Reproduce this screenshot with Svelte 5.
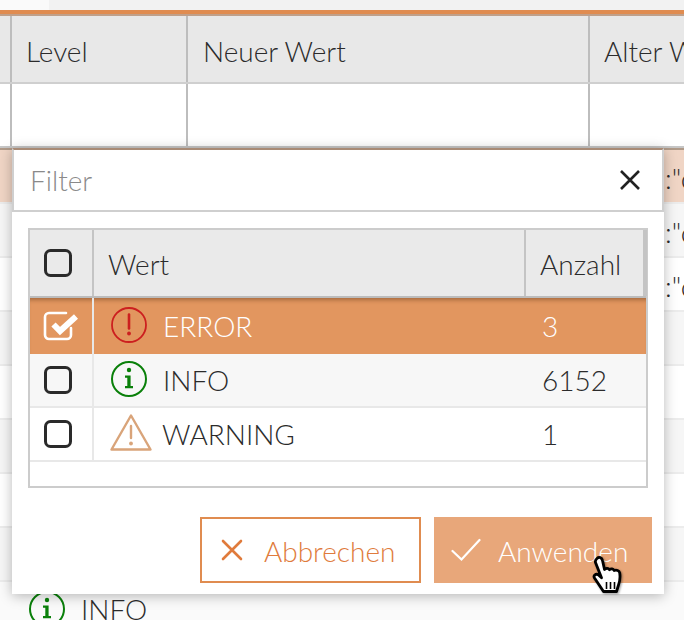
<script lang="ts">
  const columns = ['Level', 'Neuer Wert', 'Alter Wert']
  const backgroundRows = [
    { tint: 'picked', text: ':"c' },
    { tint: 'odd', text: ':"c' },
    { tint: '', text: ':"c' },
    { tint: 'odd', text: '' },
    { tint: '', text: '' },
    { tint: 'odd', text: '' },
    { tint: '', text: '' },
    { tint: 'odd', text: '' }
  ]
  const levels = [
    { name: 'ERROR', count: 3, icon: 'error', checked: true },
    { name: 'INFO', count: 6152, icon: 'info', checked: false },
    { name: 'WARNING', count: 1, icon: 'warning', checked: false }
  ]
</script>

{#snippet levelIcon(kind: string)}
  {#if kind === 'error'}
    <svg class="icon" viewBox="0 0 38 38" width="38" height="38">
      <circle cx="19" cy="19" r="17" fill="none" stroke="#cc1f1f" stroke-width="1.8" />
      <path d="M19 8.500v14" stroke="#cc1f1f" stroke-width="2.600" stroke-linecap="round" />
      <circle cx="19" cy="27.500" r="1.900" fill="#cc1f1f" />
    </svg>
  {:else if kind === 'info'}
    <svg class="icon" viewBox="0 0 38 38" width="38" height="38">
      <circle cx="19" cy="19" r="17" fill="none" stroke="#0a800a" stroke-width="2" />
      <circle cx="19" cy="10" r="2.200" fill="#0a800a" />
      <path d="M15 15.500h5.600V26H23v2.200h-8V26h2.300v-8.300H15z" fill="#0a800a" />
    </svg>
  {:else}
    <svg class="icon warn" viewBox="0 0 44 38" width="44" height="38">
      <path d="M21 2.500 40.500 36.500H1.500z" fill="none" stroke="#d9a47a" stroke-width="2.400" stroke-linejoin="round" />
      <path d="M21 13v12" stroke="#d9a47a" stroke-width="2.400" stroke-linecap="round" />
      <circle cx="21" cy="30.500" r="1.900" fill="#d9a47a" />
    </svg>
  {/if}
{/snippet}

{#snippet checkbox(checked: boolean)}
  {#if checked}
    <svg class="box" viewBox="0 0 36 30" width="36" height="30">
      <path d="M28 17v7a4 4 0 0 1-4 4H6a4 4 0 0 1-4-4V6a4 4 0 0 1 4-4h17" fill="none" stroke="#fff" stroke-width="2.600" stroke-linecap="round" />
      <path d="M10.500 13.500 17 20 33 5.500" fill="none" stroke="#fff" stroke-width="6" />
    </svg>
  {:else}
    <svg class="box" viewBox="0 0 36 30" width="36" height="30">
      <rect x="2.500" y="2.500" width="25" height="25" rx="5" fill="none" stroke="#2a2a2a" stroke-width="3" />
    </svg>
  {/if}
{/snippet}

<div class="page">
  <div class="topbar"><span class="tab"></span></div>
  <div class="accent"></div>

  <div class="grid head">
    <div class="stub"></div>
    {#each columns as col}
      <div class="th">{col}</div>
    {/each}
  </div>
  <div class="grid filters">
    <div class="stub"></div>
    <div class="cell"></div>
    <div class="cell"></div>
    <div class="cell"></div>
  </div>

  <div class="rows">
    {#each backgroundRows as row}
      <div class="row {row.tint}">{row.text}</div>
    {/each}
    <div class="row last">
      {@render levelIcon('info')}
      <span>INFO</span>
    </div>
  </div>

  <div class="popup">
    <div class="search">
      <span class="placeholder">Filter</span>
      <svg viewBox="0 0 22 22" width="22" height="22">
        <path d="M2 2l18 18M20 2 2 20" stroke="#222" stroke-width="2.600" />
      </svg>
    </div>

    <div class="list">
      <div class="list-head">
        <div class="check">{@render checkbox(false)}</div>
        <div class="col-name">Wert</div>
        <div class="col-count">Anzahl</div>
        <div class="col-end"></div>
      </div>
      {#each levels as level}
        <div class="item" class:checked={level.checked}>
          <div class="check">{@render checkbox(level.checked)}</div>
          <div class="name">
            {@render levelIcon(level.icon)}
            <span>{level.name}</span>
          </div>
          <div class="count">{level.count}</div>
        </div>
      {/each}
    </div>

    <div class="actions">
      <button class="cancel">
        <svg viewBox="0 0 22 22" width="22" height="22">
          <path d="M2 2l18 18M20 2 2 20" stroke="#e07b3c" stroke-width="2.600" stroke-linecap="round" />
        </svg>
        <span>Abbrechen</span>
      </button>
      <button class="apply">
        <svg viewBox="0 0 30 24" width="30" height="24">
          <path d="M1.500 13 10.500 21.500 28.500 2" fill="none" stroke="#fff" stroke-width="2.200" stroke-linecap="round" />
        </svg>
        <span>Anwenden</span>
      </button>
    </div>
  </div>

  <svg class="cursor" viewBox="0 0 34 40" width="34" height="40">
    <path d="M6 3.500c2-2 5-1 5.500 2l2 9c1.800-1.500 3.800-1.500 5 .2 1.600-1.200 3.600-1 4.700.8 2.300-.8 5 0 5.500 2.200.6 4 .3 8.300-1.200 12.300l-2 6.500H12.500l-9-13.500c-1.500-2.500 1.500-5 4-3l3 2.700L4.500 7.500c-.4-1.500.3-3 1.500-4z" fill="#fff" stroke="#000" stroke-width="2.800" stroke-linejoin="round" />
    <path d="M15.500 27v7M19.500 27v7M23.500 27v7" stroke="#000" stroke-width="1.600" />
  </svg>
</div>

<style>
  :global(body) {
    margin: 0;
    background: #fff;
  }

  .page {
    position: relative;
    width: 684px;
    height: 620px;
    overflow: hidden;
    font-family: Lato, "Open Sans", sans-serif;
    font-weight: 300;
    font-size: 28px;
    color: #2b2b2b;
    background: #fff;
  }

  .topbar {
    height: 10px;
    background: #f2f2f2;
  }

  .tab {
    display: block;
    width: 49px;
    height: 10px;
    background: #fafafa;
  }

  .accent {
    height: 4px;
    background: #e08c50;
    border-bottom: 2px solid #c0a08a;
  }

  .grid {
    display: grid;
    grid-template-columns: 12px 176px 402px 300px;
  }

  .grid > div {
    box-sizing: border-box;
    border-right: 2px solid #bdbdbd;
  }

  .head {
    height: 68px;
    box-sizing: border-box;
    background: #e8e8e8;
    border-bottom: 2px solid #cfcfcf;
  }

  .th {
    padding: 17px 0 0 14px;
    line-height: 36px;
    white-space: nowrap;
  }

  .th:nth-child(3) {
    padding-left: 15px;
  }

  .filters {
    height: 64px;
    box-sizing: border-box;
    background: #fff;
    border-bottom: 2px solid #c6c6c6;
  }

  .rows {
    border-top: 2px solid #b09a88;
  }

  .row {
    height: 54px;
    box-sizing: border-box;
    border-bottom: 2px solid #ececec;
    padding-left: 665px;
    line-height: 56px;
    white-space: nowrap;
    background: #fff;
  }

  .row.odd {
    background: #f6f6f6;
  }

  .row.picked {
    background: #f0d5c5;
  }

  .row.last {
    display: flex;
    align-items: center;
    gap: 15px;
    padding-left: 28px;
    border: none;
    background: #fafafa;
  }

  .popup {
    position: absolute;
    left: 12px;
    top: 148px;
    width: 652px;
    height: 446px;
    background: #fff;
    box-shadow: 0 2px 12px rgba(0, 0, 0, 0.28);
  }

  .search {
    height: 64px;
    box-sizing: border-box;
    border: 2px solid #cfcfcf;
    border-top-color: #a88a75;
    display: flex;
    align-items: center;
    justify-content: space-between;
    padding: 0 21px 0 16px;
  }

  .placeholder {
    color: #8a8a8a;
  }

  .list {
    margin: 16px 16px 0;
    height: 260px;
    box-sizing: border-box;
    border: 2px solid #cccccc;
  }

  .list-head {
    display: grid;
    grid-template-columns: 64px 432px 119px 1fr;
    height: 68px;
    box-sizing: border-box;
    background: #eaeaea;
    border-bottom: 2px solid #bcbcbc;
  }

  .list-head > div {
    display: flex;
    align-items: center;
    border-right: 2px solid #c4c4c4;
    box-sizing: border-box;
  }

  .col-name,
  .col-count {
    padding: 1px 0 0 14px;
  }

  .check {
    display: flex;
    align-items: center;
    padding-left: 13px;
  }

  .item {
    display: grid;
    grid-template-columns: 64px 432px 1fr;
    height: 54px;
    box-sizing: border-box;
    border-bottom: 2px solid #e8e8e8;
    background: #fff;
  }

  .item:nth-of-type(3) {
    background: #f7f7f7;
  }

  .item.checked {
    height: 56px;
    background: #e2965f;
    color: #fff;
    border: none;
    box-shadow: inset 0 5px 4px -3px rgba(90, 50, 20, 0.45);
  }

  .item > .check {
    border-right: 2px solid #e8e8e8;
    box-sizing: border-box;
  }

  .name {
    display: flex;
    align-items: center;
    gap: 15px;
    padding-left: 16px;
  }

  .name .icon {
    margin-bottom: 3px;
  }

  .name .warn {
    margin: 0 -7px 5px 0;
  }

  .count {
    display: flex;
    align-items: center;
    padding-left: 16px;
  }

  .icon,
  .box {
    display: block;
    flex: none;
  }

  .actions {
    display: flex;
    justify-content: flex-end;
    gap: 13px;
    margin: 29px 12px 0 0;
  }

  button {
    height: 66px;
    box-sizing: border-box;
    display: flex;
    align-items: center;
    font: inherit;
    padding: 0;
    cursor: pointer;
  }

  button span {
    padding-top: 1px;
  }

  .cancel {
    width: 221px;
    gap: 21px;
    padding-left: 19px;
    background: #fff;
    color: #e07b3c;
    border: 2px solid #e08c50;
  }

  .apply {
    width: 218px;
    gap: 17px;
    padding-left: 17px;
    background: #e8a77a;
    color: #fff;
    border: none;
  }

  .cursor {
    position: absolute;
    left: 591px;
    top: 555px;
    filter: drop-shadow(1px 1px 1px rgba(0, 0, 0, 0.4));
  }
</style>
